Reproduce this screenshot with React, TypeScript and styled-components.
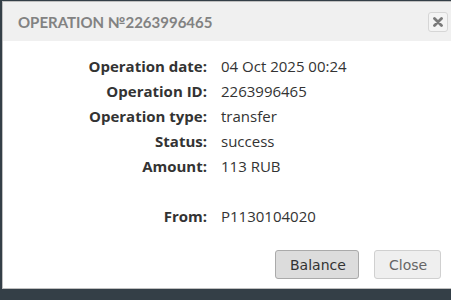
import { FC } from 'react'
import styled, { createGlobalStyle } from 'styled-components'

const rows = [
  { label: 'Operation date:', value: '04 Oct 2025 00:24' },
  { label: 'Operation ID:', value: '2263996465' },
  { label: 'Operation type:', value: 'transfer' },
  { label: 'Status:', value: 'success' },
  { label: 'Amount:', value: '113 RUB' },
]

const App: FC = () => {
  return (
    <>
      <GlobalStyle />
      <Page>
        <Dialog>
          <Header>
            <Title>OPERATION №2263996465</Title>
            <CloseIcon aria-label="close">
              <svg width="10" height="10" viewBox="0 0 10 10">
                <path d="M1.5 1.5 L8.5 8.5 M8.5 1.5 L1.5 8.5" stroke="#7a7a7a" strokeWidth="2.8" strokeLinecap="round" />
              </svg>
            </CloseIcon>
          </Header>
          <Body>
            <Details>
              {rows.map((r) => (
                <Row key={r.label}>
                  <Label>{r.label}</Label>
                  <Value>{r.value}</Value>
                </Row>
              ))}
              <Row $gap>
                <Label>From:</Label>
                <Value>P1130104020</Value>
              </Row>
            </Details>
          </Body>
          <Footer>
            <Button $primary>Balance</Button>
            <Button>Close</Button>
          </Footer>
        </Dialog>
      </Page>
    </>
  )
}

export default App

const GlobalStyle = createGlobalStyle`
  html, body {
    margin: 0;
    padding: 0;
    background: #343f47;
  }
`
const Page = styled.div`
  width: 451px;
  height: 300px;
  overflow: hidden;
  background: #343f47;
  padding: 1px 0 0 2px;
  box-sizing: border-box;
`
const Dialog = styled.div`
  width: 470px;
  height: 288px;
  background: #fff;
  border: 1px solid #bfbfbf;
  border-right: none;
  box-sizing: border-box;
  display: flex;
  flex-direction: column;
`
const Header = styled.div`
  height: 39px;
  background: #f0f0f0;
  display: flex;
  align-items: center;
  padding: 0 0 0 15px;
  width: 449px;
  box-sizing: border-box;
`
const Title = styled.div`
  flex: 1;
  font-family: Lato, sans-serif;
  font-size: 15px;
  font-weight: 700;
  letter-spacing: 0;
  color: #828282;
  padding-top: 1px;
`
const CloseIcon = styled.button`
  width: 20px;
  height: 20px;
  margin-right: 4px;
  padding: 0;
  border: 1px solid #d6d6d6;
  border-radius: 3px;
  background: #f4f4f4;
  display: flex;
  align-items: center;
  justify-content: center;
`
const Body = styled.div`
  flex: 1;
  padding: 13px 0 0 0;
`
const Details = styled.div`
  display: grid;
  grid-template-columns: 204px auto;
`
const Row = styled.div<{ $gap?: boolean }>`
  display: contents;

  & > * {
    margin-top: ${(p) => (p.$gap ? '25px' : '0')};
  }
`
const Label = styled.div`
  font-family: 'Open Sans', sans-serif;
  font-weight: 700;
  font-size: 15px;
  line-height: 25px;
  color: #333;
  text-align: right;
`
const Value = styled.div`
  font-family: 'Open Sans', sans-serif;
  font-size: 15px;
  line-height: 25px;
  color: #333;
  padding-left: 14px;
`
const Footer = styled.div`
  display: flex;
  gap: 15px;
  padding: 0 0 9px 272px;
`
const Button = styled.button<{ $primary?: boolean }>`
  height: 29px;
  padding: 0 14px;
  font-family: 'DejaVu Sans', sans-serif;
  font-size: 14px;
  color: ${(p) => (p.$primary ? '#333' : '#666')};
  border: 1px solid ${(p) => (p.$primary ? '#aaa' : '#d0d0d0')};
  border-radius: 3px;
  background: ${(p) => (p.$primary ? '#dcdcdc' : '#efefef')};
  width: ${(p) => (p.$primary ? '84px' : '67px')};
`
